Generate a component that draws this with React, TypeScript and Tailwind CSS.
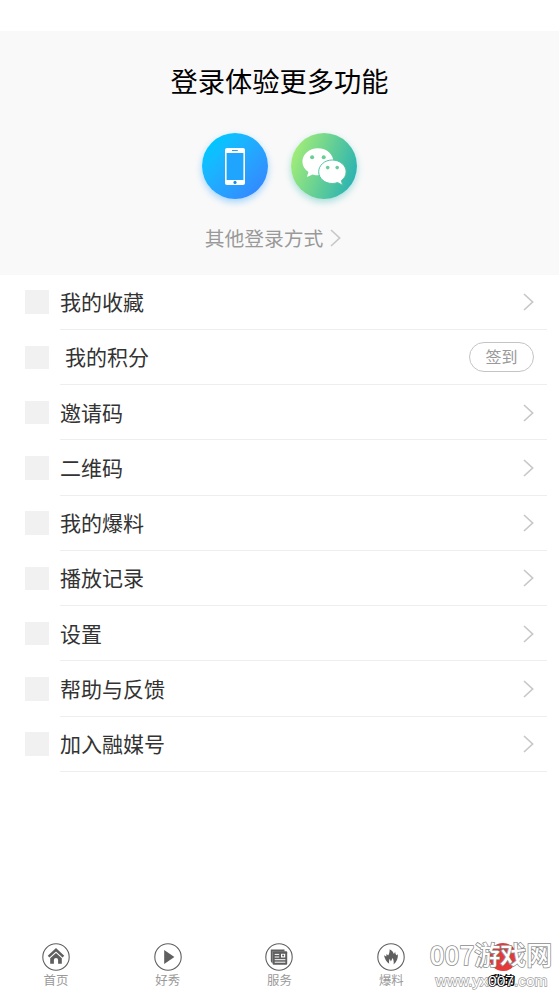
import React from 'react';

interface MenuItem {
  label: string;
  badge?: string;
}

const menuItems: MenuItem[] = [
  { label: '我的收藏' },
  { label: '我的积分', badge: '签到' },
  { label: '邀请码' },
  { label: '二维码' },
  { label: '我的爆料' },
  { label: '播放记录' },
  { label: '设置' },
  { label: '帮助与反馈' },
  { label: '加入融媒号' },
];

const Chevron: React.FC<{ className?: string }> = ({ className }) => (
  <svg viewBox="0 0 11 18" className={className} fill="none" stroke="currentColor" strokeWidth="1.7">
    <path d="M1 1L9.6 9L1 17" />
  </svg>
);

const HomeIcon = () => (
  <>
    <path d="M6.6 13.6L14 6.8L21.4 13.6" fill="none" stroke="currentColor" strokeWidth="2.5" />
    <path d="M8.2 15.2L14 10L19.8 15.2V20.8H16.1V17a2.1 2.1 0 0 0-4.2 0v3.8H8.2z" fill="currentColor" />
  </>
);

const PlayIcon = () => <path d="M10.2 7L20.4 14L10.2 21z" fill="currentColor" />;

const NewsIcon = () => (
  <>
    <path d="M5.8 6.4H19.5V8.4H7.6V20.2Q5.8 19.6 5.8 18z" fill="currentColor" />
    <rect x="7.6" y="8.2" width="14.6" height="13.6" rx="1" fill="currentColor" />
    <path d="M9.7 11.4h4.5M9.7 14h4.5M9.7 16.7h10.7M9.7 19.2h10.7" stroke="white" strokeWidth="1" />
    <rect x="16" y="10.8" width="4.2" height="3.7" fill="white" />
    <circle cx="18.1" cy="12.6" r="1" fill="currentColor" />
  </>
);

const FireIcon = () => (
  <path
    d="M12.6 6.2C14.9 7.4 16.3 9 16.9 11L18.2 8.8C18.2 10.8 18.9 11.6 19.6 12.2L20.9 11.2C21 15.2 20 18.8 16.6 21.4C17 19 16.6 17 15.6 15L13.9 18.4L12.6 15.8C12 17.4 11.9 19.2 12.2 20.8C9.6 19 7.6 15.6 7 12.2L9.2 13.6L9.6 11L11.2 12.4C12.3 10.4 12.8 8.4 12.6 6.2z"
    fill="currentColor"
  />
);

const tabs = [
  { label: '首页', icon: <HomeIcon /> },
  { label: '好秀', icon: <PlayIcon /> },
  { label: '服务', icon: <NewsIcon /> },
  { label: '爆料', icon: <FireIcon /> },
];

const PhoneIcon = () => (
  <svg viewBox="0 0 20 37" className="w-5 h-[37px]">
    <rect width="20" height="37" rx="2" fill="white" />
    <rect x="1.6" y="5" width="16.8" height="27" fill="#20a5ff" />
    <path d="M7.4 2.5h5" stroke="#20a5ff" strokeWidth="1" strokeLinecap="round" />
    <circle cx="10" cy="34.4" r="1.6" fill="#168cef" />
  </svg>
);

const WechatIcon = () => (
  <svg viewBox="0 0 66 66" className="w-[66px] h-[66px]">
    <path
      d="M27 15.2C18.2 15.2 11.4 21.3 11.4 28.6C11.4 33.2 13.7 36.6 17.4 39L15.9 44L21.7 41.4C23.5 42 25.2 42.2 27 42.2C35.8 42.2 42.4 36 42.4 28.7C42.4 21.3 35.8 15.2 27 15.2z"
      fill="white"
    />
    <path
      d="M41.2 27C33.4 27 27.7 32.5 27.7 38.8C27.7 45.3 33.4 50.5 41.2 50.5C43.2 50.5 45 50.2 46.6 49.5L51.5 52.2L50.4 47.5C53.3 45.4 55.1 42.4 55.1 38.8C55.1 32.5 49 27 41.2 27z"
      fill="white"
      stroke="#4fc6a2"
      strokeWidth="1"
    />
    <g fill="#69cd98">
      <circle cx="21.1" cy="24.2" r="2" />
      <circle cx="32.7" cy="24.2" r="2" />
      <circle cx="36.7" cy="34.6" r="1.8" />
      <circle cx="46.2" cy="34.6" r="1.8" />
    </g>
  </svg>
);

const App: React.FC = () => {
  return (
    <div className="relative flex h-[994px] w-[559px] flex-col overflow-hidden bg-white pt-[30.5px] font-['Noto_Sans_CJK_SC',sans-serif]">
      <header className="flex h-[244px] shrink-0 flex-col items-center bg-[#f9f9f9] pt-[29px]">
        <h1 className="text-[27.25px] leading-10 text-black">登录体验更多功能</h1>
        <div className="mt-[33.5px] flex gap-[23px] pr-[0.5px]">
          <button className="flex h-[66px] w-[66px] items-center justify-center rounded-full bg-linear-to-br from-[#00c6ff] from-15% to-[#3387ff] to-90% shadow-[0_3px_7px_rgba(30,155,255,0.4)]">
            <PhoneIcon />
          </button>
          <button className="flex h-[66px] w-[66px] items-center justify-center rounded-full bg-[linear-gradient(110deg,#a8f074_5%,#2bb3b2_90%)] shadow-[0_3px_7px_rgba(45,180,177,0.4)]">
            <WechatIcon />
          </button>
        </div>
        <button className="mt-[23.5px] flex items-center gap-[7px] pr-[13px] text-[19.8px] leading-[30px] text-[#999999]">
          其他登录方式
          <Chevron className="h-[18px] w-[11px] text-[#c8c8c8]" />
        </button>
      </header>

      <main>
        {menuItems.map((item) => (
          <div key={item.label} className="flex h-[55.25px] items-center pl-[25px]">
            <div className="h-[23.5px] w-[23.5px] bg-[#f1f1f1]" />
            <div className="ml-[11.5px] mr-3 flex h-full flex-1 items-center justify-between border-b border-[#eeeeee] pr-[13px]">
              <span className={`pb-px text-[21px] leading-[30px] text-[#333333] ${item.badge ? 'pl-[5px]' : ''}`}>
                {item.label}
              </span>
              {item.badge ? (
                <button className="h-[30px] w-[65px] rounded-full border-[1.5px] border-[#c4c4c4] text-[16px] leading-[27px] text-[#999999]">
                  {item.badge}
                </button>
              ) : (
                <Chevron className="mt-px h-[18px] w-[11px] text-[#c8c8c8]" />
              )}
            </div>
          </div>
        ))}
      </main>

      <nav className="mt-auto flex h-[51.5px] text-[12.4px] leading-4 text-[#999999]">
        {tabs.map((tab) => (
          <div key={tab.label} className="flex flex-1 flex-col items-center">
            <svg viewBox="0 0 28 28" className="h-7 w-7 shrink-0 text-[#5f5f5f]">
              <circle cx="14" cy="14" r="13.2" fill="none" stroke="currentColor" strokeWidth="1.1" />
              {tab.icon}
            </svg>
            <span className="mt-[1.5px]">{tab.label}</span>
          </div>
        ))}
        <div className="flex flex-1 flex-col items-center text-black">
          <div className="h-7 w-7 rounded-full bg-[#e63a3a]" />
          <span className="mt-[1.5px] font-bold">我的</span>
        </div>
      </nav>

      <div className="pointer-events-none absolute bottom-0 right-0 flex h-[59px] w-[136px] flex-col items-center text-white">
        <span className="text-[26px] font-medium leading-[38px] whitespace-nowrap [-webkit-text-stroke:1.5px_#8c8c8c] [paint-order:stroke]">
          007游戏网
        </span>
        <span className="pl-[1px] font-['Liberation_Sans',sans-serif] text-[15.5px] leading-[15px] whitespace-nowrap [-webkit-text-stroke:1.4px_#a0a0a0] [paint-order:stroke]">
          www.yx<span className="[-webkit-text-stroke:1.6px_#111111]">007</span>.com
        </span>
      </div>
    </div>
  );
};

export default App;
